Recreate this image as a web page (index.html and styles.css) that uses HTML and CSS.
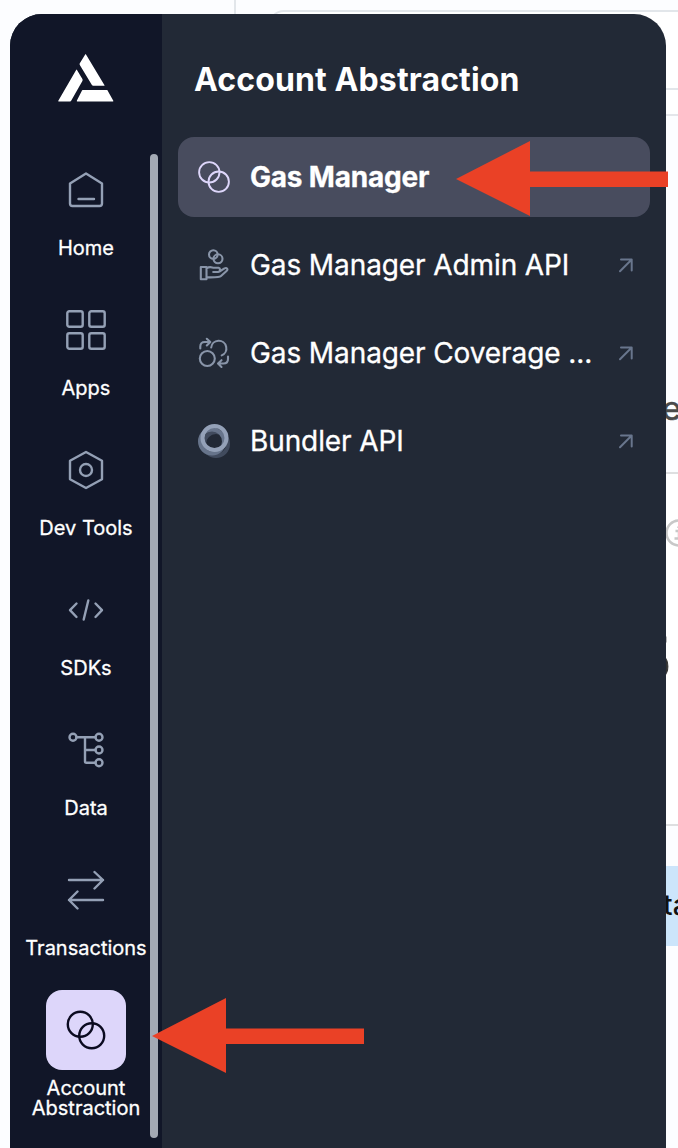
FILE: index.html
```html
<!DOCTYPE html>
<html lang="en">
<head>
<meta charset="utf-8">
<title>Account Abstraction</title>
<link rel="stylesheet" href="styles.css">
</head>
<body>
<div class="page">
  <div class="page-side"></div>
  <div class="page-main">
    <div class="page-card"></div>
    <div class="page-gap"></div>
    <div class="page-head"><span>e</span></div>
    <div class="page-body">
      <svg class="info" width="28" height="28" viewBox="0 0 28 28"><circle cx="14" cy="14" r="12.500"/><path d="M10.500 12h3.500v7M9.500 19.500h8M13.500 7.500v1.500"/></svg>
      <span class="figure">5</span>
    </div>
    <div class="page-foot"><div class="action">ta</div></div>
  </div>
</div>

<div class="panel">
  <nav class="rail">
    <svg class="logo" width="56" height="48" viewBox="0 0 56 48"><path d="M27.700 0 46.500 31.300Q46.700 31.800 46.200 31.800H35.200Q34.300 31.800 33.900 31L21.800 11Q21.300 10 21.800 9.200L27.200 0.400Q27.500 0 27.700 0ZM18.700 15.500 24.400 25Q24.900 26 24.400 27L13.300 46.500Q12.900 47.500 12 47.500H.7Q0 47.500.3 46.800L18.300 15.700ZM24.600 36H49.300L55.300 46.800Q55.600 47.500 54.900 47.500H19.300Q18.500 47.500 18.900 46.600L24 36.600Q24.200 36 24.600 36Z"/></svg>
    <a class="item"><span class="tile"><svg class="icon" viewBox="0 0 40 40"><path d="M4 13.500 20 3.500 36 13.500V33.500a2.500 2.500 0 0 1-2.500 2.500h-27A2.500 2.500 0 0 1 4 33.500ZM12.500 29H28"/></svg></span><span class="label">Home</span></a>
    <a class="item"><span class="tile"><svg class="icon" viewBox="0 0 40 40"><rect x="1.300" y="1.300" width="15.400" height="15.400" rx="2"/><rect x="23.300" y="1.300" width="15.400" height="15.400" rx="2"/><rect x="1.300" y="23.300" width="15.400" height="15.400" rx="2"/><rect x="23.300" y="23.300" width="15.400" height="15.400" rx="2"/></svg></span><span class="label">Apps</span></a>
    <a class="item"><span class="tile"><svg class="icon" viewBox="0 0 40 40"><path d="M20 2 36 10.800V29.200L20 38 4 29.200V10.800Z"/><circle cx="20" cy="20" r="6"/></svg></span><span class="label">Dev Tools</span></a>
    <a class="item"><span class="tile"><svg class="icon" viewBox="0 0 40 40"><path d="M10.500 13.500 4 20.200 10.500 27M29.500 13.500 36 20.200 29.500 27M22.300 10.500 17.700 29.500"/></svg></span><span class="label">SDKs</span></a>
    <a class="item"><span class="tile"><svg class="icon" viewBox="0 0 40 40"><circle cx="7" cy="7.200" r="3.500"/><circle cx="33" cy="7.200" r="3.500"/><circle cx="33" cy="20" r="3.500"/><circle cx="33" cy="32.800" r="3.500"/><path d="M10.500 7.200H29.500M19 7.200V31.500Q19 32.800 20.300 32.800H29.500M19 20H29.500"/></svg></span><span class="label">Data</span></a>
    <a class="item"><span class="tile"><svg class="icon" viewBox="0 0 40 40"><path d="M3 10H37M28.500 2 37 10 28.500 18.500M37 30H3M11.500 21.500 3 30 11.500 38.500"/></svg></span><span class="label">Transactions</span></a>
    <a class="item"><span class="tile active"><svg class="icon" viewBox="0 0 40 40"><circle cx="14.300" cy="14.300" r="12.500"/><circle cx="25.700" cy="25.700" r="12.500"/></svg></span><span class="label">Account<br>Abstraction</span></a>
    <div class="scrollbar"></div>
  </nav>
  <section class="menu">
    <h1>Account Abstraction</h1>
    <a class="row selected"><svg class="row-icon" viewBox="0 0 32 32"><circle cx="11.300" cy="11.300" r="10.200"/><circle cx="20.700" cy="20.700" r="10.200"/></svg><span class="name">Gas Manager</span></a>
    <a class="row"><svg class="row-icon" viewBox="0 0 32 32"><circle cx="15.300" cy="5.500" r="4.300"/><circle cx="20" cy="9.800" r="4.500"/><path d="M2.800 18H8.500V30.300H2.800ZM8.500 19.300C12 17 13.500 18.500 16 18.800H20.500C22.500 19.200 22.500 22.800 20 23H15.200M21.500 22.500 26.500 19.400C28.800 18.300 30.500 20.200 28.500 22L23 27C21.500 28.500 18 28.600 8.500 28.300"/></svg><span class="name">Gas Manager Admin API</span><svg class="ext" viewBox="0 0 16 16"><path d="M3 2.500H13.700V13.500M13.200 3 2 14.200"/></svg></a>
    <a class="row"><svg class="row-icon" viewBox="0 0 32 32"><circle cx="9.300" cy="21.500" r="7.500"/><path d="M13.200 10.500A7.600 7.600 0 1 1 23.700 18.400M2.300 11.500V9.500Q2.300 5 6.800 5H12M8.800 1.800 12.300 5 8.800 8.500M30 19.500V22Q30 26.500 25.500 26.500H20.500M23.500 23.200 20 26.500 23.500 30"/></svg><span class="name">Gas Manager Coverage ...</span><svg class="ext" viewBox="0 0 16 16"><path d="M3 2.500H13.700V13.500M13.200 3 2 14.200"/></svg></a>
    <a class="row"><svg class="row-icon rings" viewBox="0 0 32 32"><circle class="r3" cx="18" cy="19" r="12"/><circle class="r2" cx="14" cy="16.500" r="12"/><circle class="r1" cx="16.500" cy="13" r="12"/></svg><span class="name">Bundler API</span><svg class="ext" viewBox="0 0 16 16"><path d="M3 2.500H13.700V13.500M13.200 3 2 14.200"/></svg></a>
  </section>
</div>

<svg class="arrow arrow-top" width="212" height="76" viewBox="0 0 212 76"><path d="M0 38 74 0V30.500H212V46H74V75Z"/></svg>
<svg class="arrow arrow-bottom" width="212" height="76" viewBox="0 0 212 76"><path d="M0 38 74 0V30.500H212V46H74V75Z"/></svg>
</body>
</html>
```
FILE: styles.css
```css
* { box-sizing: border-box; }
body { margin: 0; width: 678px; height: 1148px; overflow: hidden; position: relative; font-family: Inter, "Liberation Sans", sans-serif; background: #fcfdff; }

/* Dashboard behind the navigation panel */
.page { display: flex; width: 678px; height: 1148px; overflow: hidden; }
.page-side { flex: none; width: 236px; border-right: 2px solid #e2e6ea; }
.page-main { flex: none; width: 442px; display: flex; flex-direction: column; overflow: hidden; }
.page-card { flex: none; height: 80px; margin: 10px -30px 0 32px; border: 2px solid #e2e6ea; border-radius: 16px; background: #fff; }
.page-gap { flex: none; height: 26px; border-bottom: 2px solid #e4e6ea; background: #fff; }
.page-head { flex: none; height: 358px; padding: 272px 0 0 426px; border-bottom: 2px solid #dedfe0; font-size: 33px; line-height: 40px; color: #4a4a4a; -webkit-text-stroke: 0.5px #4a4a4a; }
.page-body { flex: none; height: 352px; padding-top: 45px; border-bottom: 2px solid #dedfe0; background: #fff; display: flex; flex-direction: column; align-items: flex-start; }
.info { margin-left: 429px; fill: none; stroke: #c8c8c8; stroke-width: 2.5; }
.figure { margin: 76px 0 0 399px; font-size: 60px; line-height: 72px; color: #333; -webkit-text-stroke: 1px #333; }
.page-foot { padding-top: 40px; }
.action { height: 80px; padding-left: 427px; background: #cce5fb; color: #111; font-size: 28px; font-weight: 500; line-height: 78px; }

/* Navigation panel */
.panel { position: absolute; left: 10px; top: 14px; width: 656px; height: 1134px; display: flex; overflow: hidden; border-radius: 32px 32px 0 0; background: #222936; }
.rail { position: relative; flex: none; width: 152px; background: #111628; display: flex; flex-direction: column; align-items: center; gap: 32px; }
.logo { flex: none; margin: 40px 0 16px; fill: #fff; }
.item { flex: none; width: 152px; display: flex; flex-direction: column; align-items: center; gap: 8px; color: #fff; }
.tile { width: 80px; height: 80px; display: flex; align-items: center; justify-content: center; border-radius: 16px; }
.icon { width: 40px; height: 40px; fill: none; stroke: #94a0b5; stroke-width: 2.4; stroke-linecap: round; stroke-linejoin: round; }
.active { background: #ddd6fa; }
.active .icon { stroke: #0b0b20; }
.label { font-size: 20px; line-height: 20px; text-align: center; white-space: nowrap; -webkit-text-stroke: 0.3px #fff; }
.scrollbar { position: absolute; right: 4px; top: 140px; width: 8px; height: 984px; border-radius: 4px; background: #a3a9b4; }

.menu { flex: 1; padding: 0 16px; display: flex; flex-direction: column; gap: 8px; color: #fff; }
h1 { margin: 47px 0 30px; padding-left: 16px; font-size: 32px; line-height: 38px; font-weight: 700; letter-spacing: 0.12px; white-space: nowrap; }
.row { height: 80px; padding: 0 16px 0 20px; border-radius: 16px; display: flex; align-items: center; font-size: 28px; line-height: 40px; letter-spacing: -0.1px; white-space: nowrap; -webkit-text-stroke: 0.3px #fff; }
.selected { background: #484c5e; font-weight: 700; letter-spacing: -0.2px; }
.row-icon { flex: none; width: 32px; height: 32px; margin-right: 20px; fill: none; stroke: #8995a9; stroke-width: 2.1; stroke-linecap: round; stroke-linejoin: round; }
.selected .row-icon { stroke: #ddd6fa; stroke-width: 1.9; }
.name { flex: 1; }
.ext { width: 16px; height: 16px; fill: none; stroke: #69768d; stroke-width: 2; stroke-linecap: round; stroke-linejoin: round; }
.rings { overflow: visible; }
.rings circle { stroke-width: 4; }
.rings .r1 { stroke: #94a1b8; }
.rings .r2 { stroke: #67748b; }
.rings .r3 { stroke: #414b5e; }

/* Callout arrows */
.arrow { position: absolute; fill: #ea4126; }
.arrow-top { left: 456px; top: 141px; }
.arrow-bottom { left: 152px; top: 998px; }
```
